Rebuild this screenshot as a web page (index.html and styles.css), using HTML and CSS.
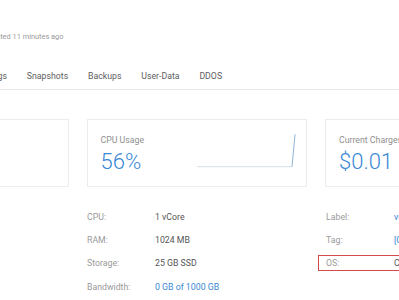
FILE: index.html
```html
<!DOCTYPE html>
<html>
<head>
<meta charset="utf-8">
<link rel="stylesheet" href="styles.css">
</head>
<body>
<div class="page">
  <div class="subtitle"><span class="clip">Crea</span>ted 11 minutes ago</div>
  <nav class="tabs">
    <span class="tab">Settings</span>
    <span class="tab">Snapshots</span>
    <span class="tab">Backups</span>
    <span class="tab">User-Data</span>
    <span class="tab">DDOS</span>
  </nav>
  <div class="cards">
    <div class="card"></div>
    <div class="card card-chart">
      <div class="stat">
        <div class="stat-label">CPU Usage</div>
        <div class="stat-value">56%</div>
      </div>
      <svg class="chart" width="102" height="36" viewBox="0 0 102 36">
        <polyline points="1,33.7 96,33.7" fill="none" stroke="#d6e1ea" stroke-width="1"/>
        <polyline points="96,33.7 99,1.3" fill="none" stroke="#8fb4d8" stroke-width="1"/>
      </svg>
    </div>
    <div class="card">
      <div class="stat">
        <div class="stat-label">Current Charges</div>
        <div class="stat-value">$0.01</div>
      </div>
    </div>
  </div>
  <div class="details">
    <div class="col"></div>
    <div class="col">
      <div class="row"><span class="k">CPU:</span><span class="v">1 vCore</span></div>
      <div class="row"><span class="k">RAM:</span><span class="v">1024 MB</span></div>
      <div class="row"><span class="k">Storage:</span><span class="v">25 GB SSD</span></div>
      <div class="row"><span class="k">Bandwidth:</span><span class="v link">0 GB of 1000 GB</span></div>
    </div>
    <div class="col">
      <div class="row"><span class="k">Label:</span><span class="v link">vultr.guest</span></div>
      <div class="row"><span class="k">Tag:</span><span class="v link">[Click here to set]</span></div>
      <div class="row hl"><span class="k">OS:</span><span class="v">CentOS 7 x64</span></div>
    </div>
  </div>
</div>
</body>
</html>
```

FILE: styles.css
```css
html, body {
  margin: 0;
  padding: 0;
  background: #ffffff;
  overflow: hidden;
}
body {
  font-family: Roboto, "Liberation Sans", sans-serif;
  width: 399px;
  height: 300px;
}
.page {
  margin-left: -152px;
  width: 760px;
}
.subtitle {
  padding-top: 31px;
  margin-left: 137px;
  font-size: 7.4px;
  line-height: 12px;
  color: #9a9a9a;
  white-space: nowrap;
}
.tabs {
  display: flex;
  margin-top: 27px;
  padding-left: 127px;
  padding-bottom: 7px;
  border-bottom: 1px solid #e6e6e6;
  font-size: 8.75px;
  line-height: 12px;
  color: #5e5e5e;
  white-space: nowrap;
}
.tab {
  margin-right: 19.8px;
}
.cards {
  display: flex;
  gap: 18px;
  margin-top: 29px;
}
.card {
  box-sizing: border-box;
  width: 220.5px;
  height: 68px;
  border: 1px solid #ececec;
  padding: 14px 8px 0 13px;
  flex: none;
}
.card-chart {
  display: flex;
  justify-content: space-between;
  align-items: flex-start;
}
.chart {
  display: block;
  margin-top: -1px;
}
.stat-label {
  font-size: 8.75px;
  line-height: 12px;
  color: #8f8f8f;
  white-space: nowrap;
}
.stat-value {
  margin-top: 4.5px;
  font-size: 22px;
  line-height: 22px;
  font-weight: 300;
  color: #3b88d6;
  white-space: nowrap;
}
.details {
  display: grid;
  grid-template-columns: 220.5px 220.5px 220.5px;
  column-gap: 18.5px;
  margin-top: 18px;
}
.row {
  display: flex;
  align-items: center;
  height: 23.3px;
  font-size: 8.75px;
  white-space: nowrap;
}
.row.hl {
  box-sizing: border-box;
  height: 16px;
  margin: 3.65px 0 3.65px -8px;
  padding-left: 7px;
  border: 1px solid #d24b4b;
}
.k {
  width: 68px;
  flex: none;
  color: #9a9a9a;
}
.v {
  color: #555555;
}
.v.link {
  color: #3b88d6;
}
```
